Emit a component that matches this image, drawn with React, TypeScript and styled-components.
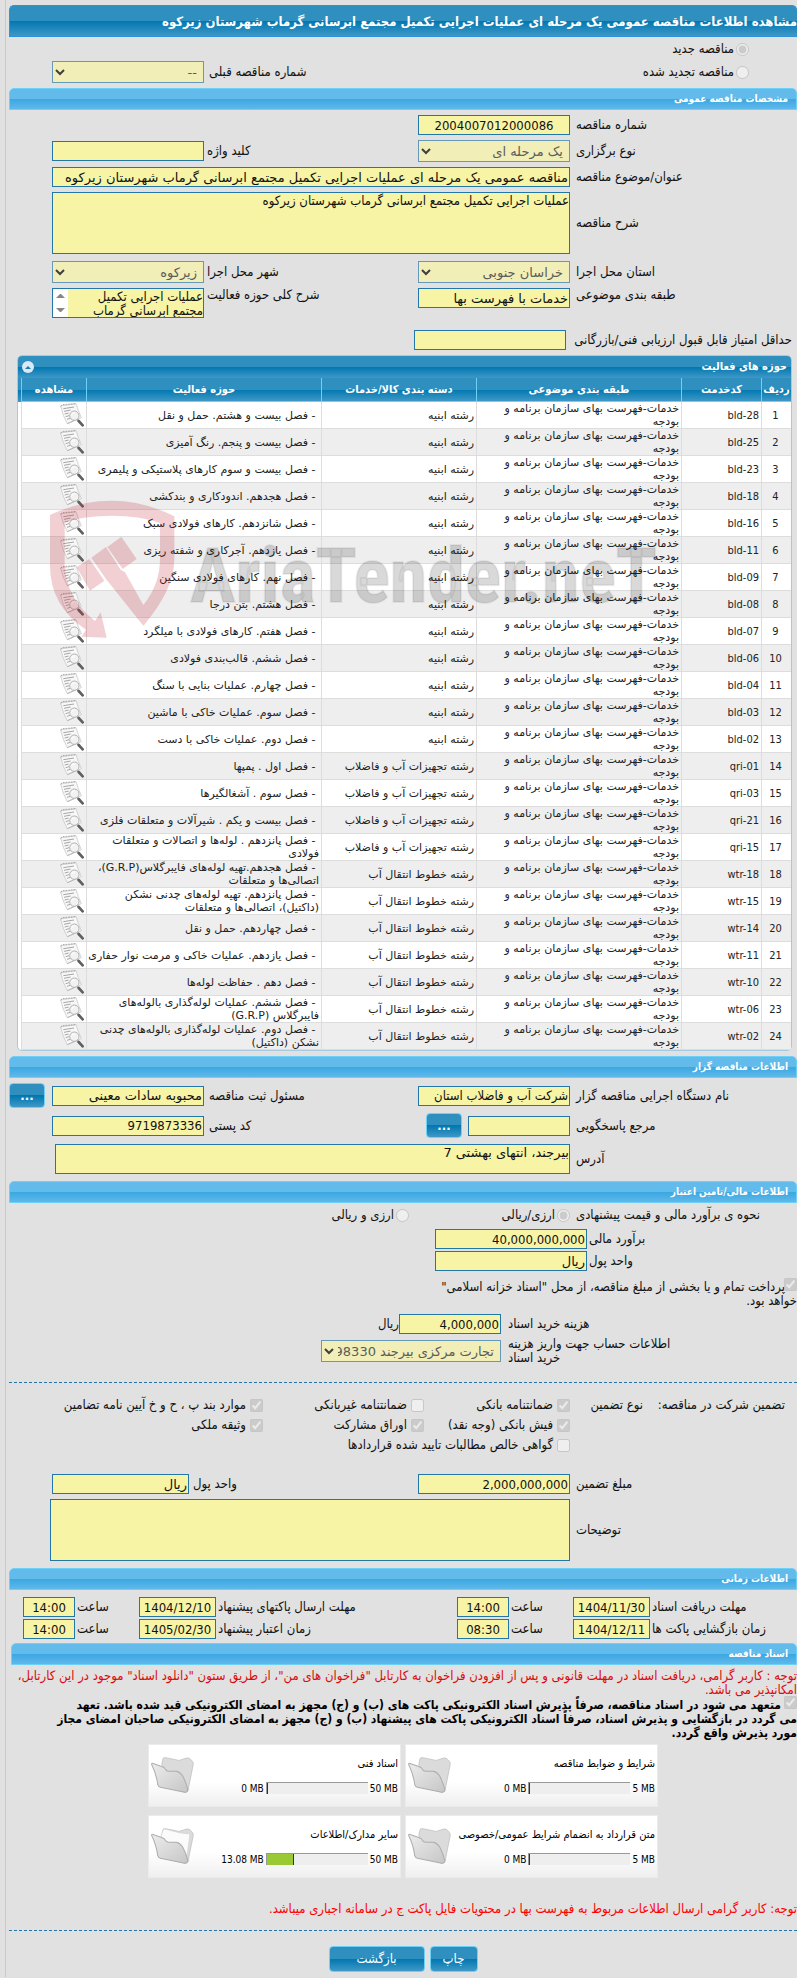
import React from 'react';
import styled, { createGlobalStyle, css } from 'styled-components';

const GlobalStyle = createGlobalStyle`
  *, *::before, *::after { box-sizing: border-box; }
  html { overflow-x: hidden; }
  body { margin: 0; background: #e1e1e1; overflow-x: hidden; }
  body, input, select, textarea, button {
    font-family: Tahoma, 'DejaVu Sans Condensed', 'DejaVu Sans', sans-serif;
  }
`;

const color = {
  line: '#2277a8',
  field: '#f7f4a6',
  fieldOff: '#f1eeb8',
  glow: '#6cd0f7',
};

const wideFace = "Tahoma, 'DejaVu Sans', sans-serif";

const deepGradient = 'linear-gradient(#2f90c0 0, #2f90c0 50%, #0077b0 50%, #3f98c6 100%)';
const lightGradient = 'linear-gradient(#63bbeb 0, #63bbeb 50%, #3aa7e1 50%, #60b8ea 100%)';

const Page = styled.main`
  margin-left: 5px;
  border-left: 1px solid #c9c9c9;
  padding: 5px 0 5px 3px;
  font-size: 13px;
  line-height: 14px;
  color: #111;
`;

const PageTitle = styled.h1`
  margin: 0;
  height: 32px;
  border: 1px solid #2d92de;
  border-right: 0;
  border-radius: 5px 5px 0 0;
  background: ${deepGradient};
  color: #fff;
  font-size: 13px;
  line-height: 32px;
  white-space: nowrap;
`;

const SectionTitle = styled.h2<{ $inset?: boolean }>`
  margin: 0 0 0 ${(p) => (p.$inset ? 2 : 0)}px;
  height: 22px;
  padding: 0 8px;
  border: 1px solid ${color.glow};
  border-radius: 5px 5px 0 0;
  background: ${lightGradient};
  color: #fff;
  font-size: 10px;
  line-height: 20px;
`;

const Form = styled.section`
  display: flex;
  flex-direction: column;
  gap: 5px;
  padding: 5px 0;
`;

const FormRow = styled.div<{ $top?: number; $bottom?: number; $align?: string }>`
  display: grid;
  grid-template-columns: 227px 152px minmax(0, 1fr) 152px 43px;
  align-items: ${(p) => p.$align ?? 'center'};
  margin-top: ${(p) => p.$top ?? 0}px;
  margin-bottom: ${(p) => p.$bottom ?? 0}px;
`;

const Wide = styled.div<{ $shift?: number }>`
  grid-column: 2 / span 3;
  margin-left: ${(p) => p.$shift ?? 0}px;
  display: grid;
`;

const Label = styled.label<{ $gap?: number }>`
  text-align: left;
  padding-left: ${(p) => p.$gap ?? 6}px;
`;

const fieldBox = css`
  display: block;
  width: 100%;
  margin: 0;
  border: 1px solid ${color.line};
  border-radius: 0;
  background: ${color.field};
  color: #111;
  font-size: 13px;
  outline: none;
`;

const TextBox = styled.input<{ $center?: boolean; $wide?: boolean }>`
  ${fieldBox}
  height: 20px;
  padding: 0 1px;
  text-align: ${(p) => (p.$center ? 'center' : 'right')};
  ${(p) => p.$wide && `font-family: ${wideFace};`}
`;

const TextArea = styled.textarea<{ $height?: number; $wide?: boolean }>`
  ${fieldBox}
  height: ${(p) => p.$height ?? 62}px;
  padding: 1px 0 0;
  line-height: 14px;
  resize: none;
  overflow: hidden;
  ${(p) => p.$wide && `font-family: ${wideFace};`}
`;

const SelectWrap = styled.div`
  position: relative;
  svg {
    position: absolute;
    left: 3px;
    top: 7px;
    width: 10px;
    height: 8px;
  }
`;

const SelectBox = styled.select`
  ${fieldBox}
  font-family: ${wideFace};
  appearance: none;
  height: 22px;
  padding: 0 6px 0 16px;
  border-color: #6699b8;
  background: ${color.fieldOff};
  color: #5c5c58;
  opacity: 1;
`;

const ScrollArea = styled.div`
  position: relative;
  svg {
    position: absolute;
    left: 1px;
    top: 1px;
    width: 15px;
    height: 28px;
    background: #fff;
  }
`;

const Tick = styled.input`
  width: 13px;
  height: 13px;
  margin: 0;
  flex: none;
`;

const Option = styled.label`
  display: flex;
  align-items: center;
  gap: 2px;
  white-space: nowrap;
`;

const ModeForm = styled(Form)`
  gap: 1px;
  padding-top: 1px;
`;

const ModeRow = styled(FormRow)`
  min-height: 22px;
  grid-template-columns: 48px minmax(0, 1fr) 214px 152px 43px;
  ${Option} { grid-column: 2; }
  ${Label} { grid-column: 3; }
`;

const MinScoreRow = styled.div`
  display: grid;
  grid-template-columns: 5px 226px 152px 1fr;
  align-items: center;
  ${Label} { grid-column: 2; white-space: nowrap; }
`;

const BlueButton = styled.button<{ $width: number; $tall?: boolean }>`
  width: ${(p) => p.$width}px;
  height: ${(p) => (p.$tall ? 26 : 25)}px;
  padding: 0;
  border: 1px solid ${color.glow};
  border-radius: 4px;
  background: ${deepGradient};
  color: #fff;
  font-size: 13px;
  font-weight: ${(p) => (p.$tall ? 400 : 700)};
  line-height: 14px;
`;

const MoreCell = styled.div`
  display: flex;
  justify-content: flex-end;
`;

const ContactCell = styled.div`
  display: flex;
  align-items: center;
  gap: 6px;
  ${TextBox} { width: 102px; }
`;

/* ---------- activity table ---------- */

const Panel = styled.section`
  position: relative;
  margin: 0 5px 0 8px;
  border: 1px solid #a6c9e2;
  border-radius: 5px;
  background: #fff;
`;

const PanelHead = styled.header`
  display: flex;
  justify-content: space-between;
  align-items: center;
  height: 22px;
  padding: 0 4px;
  border-radius: 4px 4px 0 0;
  background: ${deepGradient};
  color: #fff;
  h3 { margin: 0; font-size: 11px; line-height: 20px; }
  button {
    width: 12px;
    height: 12px;
    padding: 0;
    border: 0;
    border-radius: 50%;
    background: #dbe9f6;
    display: flex;
    align-items: center;
    justify-content: center;
  }
`;

const TableWrap = styled.div`
  padding-left: 3px;
  background: ${deepGradient} no-repeat 0 0 / 100% 24px;
`;

const Grid = styled.table`
  width: 100%;
  table-layout: fixed;
  border-collapse: separate;
  border-spacing: 0;
  font-family: ${wideFace};
  font-size: 11px;
  line-height: 13px;
  color: #222;

  th {
    height: 24px;
    padding: 0;
    border-left: 1px solid ${color.glow};
    border-bottom: 1px solid ${color.glow};
    background: ${deepGradient};
    color: #fff;
    font-family: Tahoma, 'DejaVu Sans Condensed', sans-serif;
    white-space: nowrap;
  }
  td {
    height: 27px;
    padding: 0 2px 0 0;
    border-left: 1px solid #ddd;
    border-bottom: 1px solid #ddd;
    text-align: right;
  }
  tbody tr:nth-child(even) { background: #eee; }
  tbody tr:nth-child(odd) { background: #fff; }
  td:nth-child(1) { text-align: center; }
  td:nth-child(1), td:nth-child(2) {
    font-family: Tahoma, 'DejaVu Sans Condensed', sans-serif;
  }
`;

const ViewButton = styled.button`
  display: block;
  width: 24px;
  height: 24px;
  padding: 0;
  border: 0;
  background: none;
`;

const Watermark = styled.div`
  position: absolute;
  left: 32px;
  top: 144px;
  width: 640px;
  height: 140px;
  pointer-events: none;
  svg { display: block; width: 640px; height: 140px; }
`;

/* ---------- finance ---------- */

const FinanceForm = styled(Form)`
  gap: 2px;
  padding: 1px 0;
`;

const CurrencyRow = styled(FormRow)`
  min-height: 22px;
`;

const MoneyRow = styled.div`
  display: grid;
  grid-template-columns: 210px 152px 1fr;
  align-items: center;
`;

const Choices = styled.div`
  grid-column: 2 / span 3;
  display: flex;
  ${Option} { flex: 0 0 161px; }
`;

const TreasuryNote = styled.label`
  display: block;
  width: 374px;
  margin: 7px 0 0;
  ${Tick} { margin: -2px 0 -2px -1px; vertical-align: 0; }
`;

const CostForm = styled(Form)`
  gap: 3px;
`;

const CostRow = styled.div<{ $field: number }>`
  display: grid;
  grid-template-columns: 80px 216px ${(p) => p.$field}px 1fr;
  align-items: center;
  ${Label} { grid-column: 2; }
`;

const Dashed = styled.hr<{ $top: number; $bottom: number }>`
  width: 100%;
  height: 0;
  margin: ${(p) => p.$top}px 0 ${(p) => p.$bottom}px;
  border: 0;
  border-top: 1px dashed ${color.line};
`;

const Guarantee = styled.div`
  display: grid;
  grid-template-columns: 12px 142px 73px 146px 161px 1fr;
  grid-auto-rows: 20px;
  align-items: center;
  margin-bottom: 14px;
`;

const Heading = styled.span<{ $col: number }>`
  grid-column: ${(p) => p.$col};
  white-space: nowrap;
`;

const Kind = styled(Option)<{ $col: number; $row: number }>`
  grid-column: ${(p) => p.$col};
  grid-row: ${(p) => p.$row};
  gap: 4px;
`;

const UnitRow = styled(FormRow)`
  grid-template-columns: 227px 152px minmax(0, 1fr) 137px 43px;
`;

/* ---------- dates ---------- */

const DateForm = styled(Form)`
  gap: 2px;
  padding: 7px 0 4px;
`;

const DateRow = styled.div`
  display: grid;
  grid-template-columns: 147px 77px 64px 52px minmax(0, 1fr) 77px 64px 52px 14px;
  align-items: center;
  white-space: nowrap;
`;

/* ---------- documents ---------- */

const Notice = styled.p<{ $bright?: boolean }>`
  margin: ${(p) => (p.$bright ? '24px 0 0' : '4px 0 1px')};
  color: ${(p) => (p.$bright ? '#f00' : '#dc0a0a')};
`;

const Pledge = styled.label`
  display: block;
  margin-bottom: 4px;
  font-size: 12px;
  font-weight: 700;
  color: #000;
  white-space: nowrap;
  ${Tick} { vertical-align: 0; margin: -2px 0 -2px 3px; }
`;

const Cards = styled.div`
  display: flex;
  flex-wrap: wrap;
  justify-content: center;
  gap: 8px 4px;
  width: 520px;
  margin: 0 auto;
`;

const Card = styled.article`
  display: flex;
  justify-content: space-between;
  align-items: center;
  width: 253px;
  height: 63px;
  padding: 0 2px;
  background: linear-gradient(#fff 60%, #efefef);
  border: 1px solid #ebebeb;
  color: #000;
`;

const CardBody = styled.div`
  display: flex;
  flex-direction: column;
  gap: 11px;
  h4 { margin: 0; font-size: 11px; font-weight: 400; line-height: 14px; white-space: nowrap; }
`;

const Usage = styled.div`
  display: flex;
  align-items: center;
  gap: 2px;
  font-size: 10px;
  line-height: 13px;
  white-space: nowrap;
  span { direction: ltr; }
`;

const Track = styled.div`
  display: flex;
  justify-content: flex-end;
  width: 102px;
  height: 12px;
  border-top: 1px solid #999;
  border-left: 1px solid #999;
  background: #eee;
`;

const Fill = styled.div`
  background: #9aca33;
  border-right: 1px solid #333;
`;

const Actions = styled.footer`
  display: flex;
  justify-content: center;
  gap: 5px;
`;

/* ---------- drawings ---------- */

const Chevron = () => (
  <svg viewBox="0 0 10 8" aria-hidden="true">
    <path d="M1 2 L5 6 L9 2" fill="none" stroke="#3f3f3d" strokeWidth="2" />
  </svg>
);

const PaperSearch = () => (
  <svg viewBox="0 0 72 72" width="24" height="24" aria-hidden="true">
    <path d="M2 9 L48 2 Q54 22 64 44 L22 62 Q8 38 2 9Z" fill="#f8f8f8" stroke="#c0c0c0" strokeWidth="2" />
    <path d="M2 9 L7 5 L48 2" fill="none" stroke="#808080" strokeWidth="2" strokeDasharray="5 3" />
    <path d="M10 17 L42 12 M12 25 L32 21 M14 33 L26 30 M17 41 L27 38 M21 49 L31 46" stroke="#a6a6a6" strokeWidth="3" />
    <path d="M22 62 L44 52" stroke="#a2a2a2" strokeWidth="2" />
    <circle cx="43" cy="38" r="14" fill="#f1f1f1" fillOpacity=".85" stroke="#b2b2b2" strokeWidth="3" />
    <path d="M34 38 Q36 29 45 29" fill="none" stroke="#fff" strokeWidth="3" />
    <path d="M52 50 L57 55" stroke="#a0a0a0" strokeWidth="4" />
    <path d="M56 54 L68 67" stroke="#606060" strokeWidth="8" strokeLinecap="round" />
  </svg>
);

const Folder = ({ full }: { full?: boolean }) => {
  const id = full ? 'folderFull' : 'folderEmpty';
  return (
    <svg viewBox="0 0 128 110" width="43" height="37" aria-hidden="true">
      <defs>
        <linearGradient id={id} x1="0" y1="0" x2="1" y2="1">
          <stop offset="0" stopColor="#ececec" />
          <stop offset="1" stopColor="#c6c6c6" />
        </linearGradient>
      </defs>
      <path
        d="M32 22 L36 4 Q38 1 44 2 L74 8 Q80 10 84 10 L106 3 Q112 2 116 5 L124 14 Q127 18 125 26 L110 100 Q108 106 100 105 L60 90Z"
        fill="#dbdbdb"
        stroke="#b9b9b9"
        strokeWidth="2"
      />
      {full && (
        <path d="M30 22 L38 2 L84 14 L116 18 L106 90 L60 80Z" fill="#fbfbfb" stroke="#d2d2d2" strokeWidth="2" />
      )}
      <path
        d="M2 22 Q1 18 6 19 L32 28 Q42 31 44 38 Q46 43 56 42 L76 42 Q86 44 94 56 Q104 74 110 98 Q108 106 100 105 L28 90 Q22 88 20 82 Q16 50 2 22Z"
        fill={`url(#${id})`}
        stroke="#adadad"
        strokeWidth="3"
      />
    </svg>
  );
};

const WatermarkArt = () => (
  <svg viewBox="0 0 640 140" aria-hidden="true">
    <g fill="#bf1e2a" fillOpacity=".21" transform="scale(.3333) translate(-150 -463)">
      <path d="M150 508 Q240 465 335 465 Q430 465 523 512 V640 Q523 732 430 840 L318 700 L274 636 L318 604 L362 672 L375 680 L430 778 Q480 716 480 640 V532 Q420 510 335 510 Q250 510 194 530 V660 Q200 760 285 826 L302 800 L320 876 L245 873 L258 852 Q150 780 150 660Z" />
      <path d="M322 604 L364 573 L410 640 L368 670Z" />
      <path d="M230 665 L268 640 L313 705 L270 735Z" />
    </g>
    <text
      x="140"
      y="102"
      direction="ltr"
      fontFamily="'Liberation Sans Narrow', 'Roboto Condensed', 'Open Sans Condensed', Roboto, sans-serif"
      fontSize="76"
      fontWeight="700"
      fill="#000"
      fillOpacity=".15"
      stroke="#000"
      strokeOpacity=".06"
      strokeWidth="2"
    >
      AriaTender.neT
    </text>
  </svg>
);

/* ---------- data ---------- */

const classification = 'خدمات-فهرست بهای سازمان برنامه و بودجه';
const building = 'رشته ابنیه';
const waterPlant = 'رشته تجهیزات آب و فاضلاب';
const pipeline = 'رشته خطوط انتقال آب';

const activities: [string, string, string][] = [
  ['bld-28', building, 'فصل بیست و هشتم. حمل و نقل'],
  ['bld-25', building, 'فصل بیست و پنجم. رنگ آمیزی'],
  ['bld-23', building, 'فصل بیست و سوم کارهای پلاستیکی و پلیمری'],
  ['bld-18', building, 'فصل هجدهم. اندودکاری و بندکشی'],
  ['bld-16', building, 'فصل شانزدهم. کارهای فولادی سبک'],
  ['bld-11', building, 'فصل یازدهم. آجرکاری و شفته ریزی'],
  ['bld-09', building, 'فصل نهم. کارهای فولادی سنگین'],
  ['bld-08', building, 'فصل هشتم. بتن درجا'],
  ['bld-07', building, 'فصل هفتم. کارهای فولادی با میلگرد'],
  ['bld-06', building, 'فصل ششم. قالب‌بندی فولادی'],
  ['bld-04', building, 'فصل چهارم. عملیات بنایی با سنگ'],
  ['bld-03', building, 'فصل سوم. عملیات خاکی با ماشین'],
  ['bld-02', building, 'فصل دوم. عملیات خاکی با دست'],
  ['qri-01', waterPlant, 'فصل اول . پمپها'],
  ['qri-03', waterPlant, 'فصل سوم . آشغالگیرها'],
  ['qri-21', waterPlant, 'فصل بیست و یکم . شیرآلات و متعلقات فلزی'],
  ['qri-15', waterPlant, 'فصل پانزدهم . لوله‌ها و اتصالات و متعلقات فولادی'],
  ['wtr-18', pipeline, 'فصل هجدهم.تهیه لوله‌های فایبرگلاس(G.R.P)، اتصالی‌ها و متعلقات'],
  ['wtr-15', pipeline, 'فصل پانزدهم. تهیه لوله‌های چدنی نشکن (داکتیل)، اتصالی‌ها و متعلقات'],
  ['wtr-14', pipeline, 'فصل چهاردهم. حمل و نقل'],
  ['wtr-11', pipeline, 'فصل یازدهم. عملیات خاکی و مرمت نوار حفاری'],
  ['wtr-10', pipeline, 'فصل دهم . حفاظت لوله‌ها'],
  ['wtr-06', pipeline, 'فصل ششم. عملیات لوله‌گذاری بالوله‌های فایبرگلاس (G.R.P)'],
  ['wtr-02', pipeline, 'فصل دوم. عملیات لوله‌گذاری بالوله‌های چدنی نشکن (داکتیل)'],
];

const columns: [string, number | undefined][] = [
  ['ردیف', 30],
  ['کدخدمت', 80],
  ['طبقه بندی موضوعی', 205],
  ['دسته بندی کالا/خدمات', 155],
  ['حوزه فعالیت', undefined],
  ['مشاهده', 65],
];

const guarantees: { col: number; row: number; label: string; on: boolean }[] = [
  { col: 4, row: 1, label: 'ضمانتنامه بانکی', on: true },
  { col: 5, row: 1, label: 'ضمانتنامه غیربانکی', on: false },
  { col: 6, row: 1, label: 'موارد بند پ ، ح و خ آیین نامه تضامین', on: true },
  { col: 4, row: 2, label: 'فیش بانکی (وجه نقد)', on: true },
  { col: 5, row: 2, label: 'اوراق مشارکت', on: true },
  { col: 6, row: 2, label: 'وثیقه ملکی', on: true },
  { col: 4, row: 3, label: 'گواهی خالص مطالبات تایید شده قراردادها', on: false },
];

const deadlines = [
  ['مهلت دریافت اسناد', '1404/11/30', '14:00', 'مهلت ارسال پاکتهای پیشنهاد', '1404/12/10', '14:00'],
  ['زمان بازگشایی پاکت ها', '1404/12/11', '08:30', 'زمان اعتبار پیشنهاد', '1405/02/30', '14:00'],
];

const documents = [
  { title: 'شرایط و ضوابط مناقصه', used: 0, limit: 5 },
  { title: 'اسناد فنی', used: 0, limit: 50 },
  { title: 'متن قرارداد به انضمام شرایط عمومی/خصوصی', used: 0, limit: 5 },
  { title: 'سایر مدارک/اطلاعات', used: 13.08, limit: 50 },
];

/* ---------- small composites ---------- */

const Select = ({ id, value }: { id: string; value: string }) => (
  <SelectWrap>
    <SelectBox id={id} disabled defaultValue={value}>
      <option value={value}>{value}</option>
    </SelectBox>
    <Chevron />
  </SelectWrap>
);

const Box = ({ id, value = '', center, wide }: { id: string; value?: string; center?: boolean; wide?: boolean }) => (
  <TextBox id={id} type="text" readOnly defaultValue={value} $center={center} $wide={wide} />
);

export default function App() {
  return (
    <>
      <GlobalStyle />
      <Page dir="rtl" lang="fa">
        <PageTitle>
          مشاهده اطلاعات مناقصه عمومی یک مرحله ای عملیات اجرایی تکمیل مجتمع ابرسانی گرماب شهرستان زیرکوه
        </PageTitle>

        <ModeForm>
          <ModeRow>
            <Option>
              <Tick type="radio" name="mode" disabled defaultChecked />
              مناقصه جدید
            </Option>
          </ModeRow>
          <ModeRow>
            <Option>
              <Tick type="radio" name="mode" disabled />
              مناقصه تجدید شده
            </Option>
            <Label htmlFor="previous" $gap={5}>شماره مناقصه قبلی</Label>
            <Select id="previous" value="--" />
          </ModeRow>
        </ModeForm>

        <SectionTitle>مشخصات مناقصه عمومی</SectionTitle>
        <Form>
          <FormRow>
            <Label htmlFor="number">شماره مناقصه</Label>
            <Box id="number" value="2004007012000086" center />
          </FormRow>
          <FormRow>
            <Label htmlFor="type">نوع برگزاری</Label>
            <Select id="type" value="یک مرحله ای" />
            <Label htmlFor="keyword" $gap={3}>کلید واژه</Label>
            <Box id="keyword" />
          </FormRow>
          <FormRow>
            <Label htmlFor="subject">عنوان/موضوع مناقصه</Label>
            <Wide>
              <Box
                id="subject"
                wide
                value="مناقصه عمومی یک مرحله ای عملیات اجرایی تکمیل مجتمع ابرسانی گرماب شهرستان زیرکوه"
              />
            </Wide>
          </FormRow>
          <FormRow $bottom={2}>
            <Label htmlFor="description">شرح مناقصه</Label>
            <Wide>
              <TextArea
                id="description"
                readOnly
                defaultValue="عملیات اجرایی تکمیل مجتمع ابرسانی گرماب شهرستان زیرکوه"
              />
            </Wide>
          </FormRow>
          <FormRow>
            <Label htmlFor="province">استان محل اجرا</Label>
            <Select id="province" value="خراسان جنوبی" />
            <Label htmlFor="city" $gap={3}>شهر محل اجرا</Label>
            <Select id="city" value="زیرکوه" />
          </FormRow>
          <FormRow $align="start" $bottom={7}>
            <Label htmlFor="class">طبقه بندی موضوعی</Label>
            <Box id="class" wide value="خدمات با فهرست بها" />
            <Label htmlFor="scope" $gap={3}>شرح کلی حوزه فعالیت</Label>
            <ScrollArea>
              <TextArea
                id="scope"
                $height={30}
                readOnly
                defaultValue={'عملیات اجرایی تکمیل\nمجتمع ابرسانی گرماب'}
              />
              <svg viewBox="0 0 15 28" aria-hidden="true">
                <path d="M3 9 L7 5 L8 5 L12 9Z M3 19 L7 23 L8 23 L12 19Z" fill="#868686" />
              </svg>
            </ScrollArea>
          </FormRow>
          <MinScoreRow>
            <Label htmlFor="minScore" $gap={10}>حداقل امتیاز قابل قبول ارزیابی فنی/بازرگانی</Label>
            <Box id="minScore" />
          </MinScoreRow>

          <Panel>
            <PanelHead>
              <h3>حوزه های فعالیت</h3>
              <button type="button" aria-label="بستن">
                <svg width="8" height="6" viewBox="0 0 8 6" aria-hidden="true">
                  <path d="M1 5 L4 2 L7 5Z" fill="#1f78aa" />
                </svg>
              </button>
            </PanelHead>
            <TableWrap>
              <Grid>
                <colgroup>
                  {columns.map(([name, width]) => (
                    <col key={name} width={width} />
                  ))}
                </colgroup>
                <thead>
                  <tr>
                    {columns.map(([name]) => (
                      <th key={name} scope="col">{name}</th>
                    ))}
                  </tr>
                </thead>
                <tbody>
                  {activities.map(([code, category, activity], i) => (
                    <tr key={code}>
                      <td>{i + 1}</td>
                      <td><bdi>{code}</bdi></td>
                      <td>{classification}</td>
                      <td>{category}</td>
                      <td>{'\u00a0- '}{activity}</td>
                      <td>
                        <ViewButton type="button" aria-label="مشاهده">
                          <PaperSearch />
                        </ViewButton>
                      </td>
                    </tr>
                  ))}
                </tbody>
              </Grid>
            </TableWrap>
            <Watermark>
              <WatermarkArt />
            </Watermark>
          </Panel>
        </Form>

        <SectionTitle>اطلاعات مناقصه گزار</SectionTitle>
        <Form>
          <FormRow>
            <Label htmlFor="agency">نام دستگاه اجرایی مناقصه گزار</Label>
            <Box id="agency" value="شرکت آب و فاضلاب استان" />
            <Label htmlFor="registrar" $gap={5}>مسئول ثبت مناقصه</Label>
            <Box id="registrar" wide value="محبوبه سادات معینی" />
            <MoreCell>
              <BlueButton type="button" $width={36}>...</BlueButton>
            </MoreCell>
          </FormRow>
          <FormRow>
            <Label htmlFor="contact">مرجع پاسخگویی</Label>
            <ContactCell>
              <Box id="contact" />
              <BlueButton type="button" $width={36}>...</BlueButton>
            </ContactCell>
            <Label htmlFor="postal" $gap={5}>کد پستی</Label>
            <Box id="postal" value="9719873336" />
          </FormRow>
          <FormRow $top={1} $bottom={2}>
            <Label htmlFor="address">آدرس</Label>
            <Wide $shift={3}>
              <TextArea id="address" $height={30} $wide readOnly defaultValue="بیرجند، انتهای بهشتی 7" />
            </Wide>
          </FormRow>
        </Form>

        <SectionTitle>اطلاعات مالی/تامین اعتبار</SectionTitle>
        <FinanceForm>
          <CurrencyRow $bottom={1}>
            <Label as="span">نحوه ی برآورد مالی و قیمت پیشنهادی</Label>
            <Choices>
              <Option>
                <Tick type="radio" name="currency" disabled defaultChecked />
                ارزی/ریالی
              </Option>
              <Option>
                <Tick type="radio" name="currency" disabled />
                ارزی و ریالی
              </Option>
            </Choices>
          </CurrencyRow>
          <MoneyRow>
            <Label htmlFor="estimate" $gap={2}>برآورد مالی</Label>
            <Box id="estimate" value="40,000,000,000" />
          </MoneyRow>
          <MoneyRow>
            <Label htmlFor="unit" $gap={2}>واحد پول</Label>
            <Box id="unit" wide value="ریال" />
          </MoneyRow>
          <TreasuryNote>
            <Tick type="checkbox" disabled defaultChecked />
            پرداخت تمام و یا بخشی از مبلغ مناقصه، از محل "اسناد خزانه اسلامی" خواهد بود.
          </TreasuryNote>
        </FinanceForm>
        <CostForm>
          <CostRow $field={102}>
            <Label htmlFor="cost" $gap={7}>هزینه خرید اسناد</Label>
            <Box id="cost" value="4,000,000" />
            <span>ریال</span>
          </CostRow>
          <CostRow $field={180}>
            <AccountLabel htmlFor="account" $gap={7}>
              <span>
                اطلاعات حساب جهت واریز هزینه
                <br />
                خرید اسناد
              </span>
            </AccountLabel>
            <Select id="account" value="تجارت مرکزی بیرجند 098330" />
          </CostRow>
        </CostForm>

        <Dashed $top={12} $bottom={12} />
        <Guarantee>
          <Heading $col={2}>تضمین شرکت در مناقصه:</Heading>
          <Heading $col={3}>نوع تضمین</Heading>
          {guarantees.map((g) => (
            <Kind key={g.label} $col={g.col} $row={g.row}>
              <Tick type="checkbox" disabled defaultChecked={g.on} />
              {g.label}
            </Kind>
          ))}
        </Guarantee>
        <Form>
          <UnitRow>
            <Label htmlFor="amount">مبلغ تضمین</Label>
            <Box id="amount" value="2,000,000,000" />
            <Label htmlFor="amountUnit" $gap={4}>واحد پول</Label>
            <Box id="amountUnit" wide value="ریال" />
          </UnitRow>
          <FormRow $bottom={2}>
            <Label htmlFor="notes">توضیحات</Label>
            <Wide $shift={-2}>
              <TextArea id="notes" readOnly />
            </Wide>
          </FormRow>
        </Form>

        <SectionTitle>اطلاعات زمانی</SectionTitle>
        <DateForm>
          {deadlines.map(([a, dateA, hourA, b, dateB, hourB], i) => (
            <DateRow key={a}>
              <Label htmlFor={`dateA${i}`} $gap={2}>{a}</Label>
              <Box id={`dateA${i}`} value={dateA} center />
              <Label htmlFor={`hourA${i}`} $gap={2}>ساعت</Label>
              <Box id={`hourA${i}`} value={hourA} center />
              <Label htmlFor={`dateB${i}`} $gap={2}>{b}</Label>
              <Box id={`dateB${i}`} value={dateB} center />
              <Label htmlFor={`hourB${i}`} $gap={2}>ساعت</Label>
              <Box id={`hourB${i}`} value={hourB} center />
            </DateRow>
          ))}
        </DateForm>

        <SectionTitle $inset>اسناد مناقصه</SectionTitle>
        <Notice>
          توجه : کاربر گرامی، دریافت اسناد در مهلت قانونی و پس از افزودن فراخوان به کارتابل "فراخوان های من"، از طریق
          ستون "دانلود اسناد" موجود در این کارتابل، امکانپذیر می باشد.
        </Notice>
        <Pledge>
          <Tick type="checkbox" disabled defaultChecked />
          متعهد می شود در اسناد مناقصه، صرفاً پذیرش اسناد الکترونیکی پاکت های (ب) و (ج) مجهز به امضای الکترونیکی قید شده
          باشد. تعهد
          <br />
          می گردد در بازگشایی و پذیرش اسناد، صرفاً اسناد الکترونیکی پاکت های پیشنهاد (ب) و (ج) مجهز به امضای الکترونیکی
          صاحبان امضای مجاز
          <br />
          مورد پذیرش واقع گردد.
        </Pledge>
        <Cards>
          {documents.map((d) => (
            <Card key={d.title}>
              <CardBody>
                <h4>{d.title}</h4>
                <Usage>
                  <span>{d.limit} MB</span>
                  <Track>
                    <Fill style={{ width: `calc(${(d.used / d.limit) * 100}% + 1px)` }} />
                  </Track>
                  <span>{d.used} MB</span>
                </Usage>
              </CardBody>
              <Folder full={d.used > 0} />
            </Card>
          ))}
        </Cards>
        <Notice $bright>
          توجه: کاربر گرامی ارسال اطلاعات مربوط به فهرست بها در محتویات فایل پاکت ج در سامانه اجباری میباشد.
        </Notice>
        <Dashed $top={14} $bottom={15} />
        <Actions>
          <BlueButton type="button" $width={48} $tall>چاپ</BlueButton>
          <BlueButton type="button" $width={96} $tall>بازگشت</BlueButton>
        </Actions>
      </Page>
    </>
  );
}

const AccountLabel = styled(Label)`
  white-space: nowrap;
`;
